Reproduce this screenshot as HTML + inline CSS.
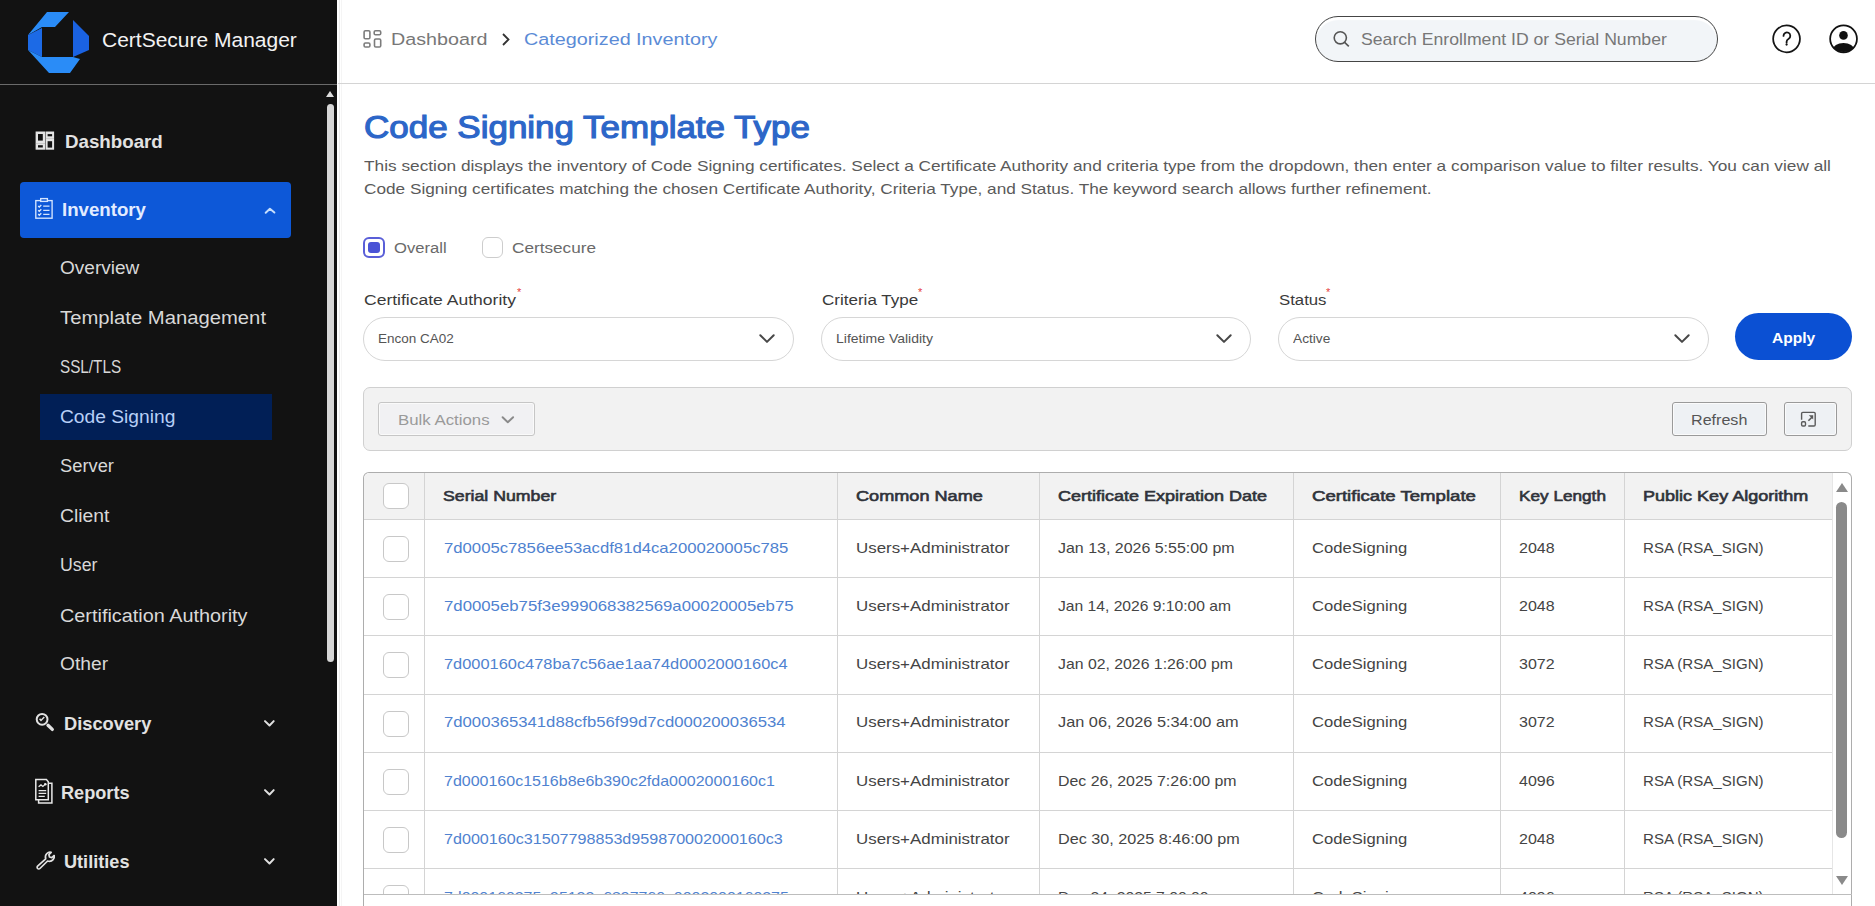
<!DOCTYPE html>
<html><head><meta charset="utf-8">
<style>
*{box-sizing:border-box;margin:0;padding:0}
html,body{width:1875px;height:906px;overflow:hidden;background:#fff;font-family:"Liberation Sans",sans-serif;position:relative}
.abs{position:absolute}
.t{position:absolute;white-space:nowrap;line-height:1;transform-origin:0 0}
.chev{position:absolute;border-right:2px solid #ddd;border-bottom:2px solid #ddd;transform:rotate(45deg)}
.cb{position:absolute;width:26px;height:26px;border:1.5px solid #c8c8c8;border-radius:6px;background:#fff}
.vl{position:absolute;width:1px;background:#d4d4d4}
.hl{position:absolute;height:1px;background:#d4d4d4}
</style></head>
<body>
<div class="abs" style="left:0;top:0;width:337px;height:906px;background:#121212"></div>
<svg class="abs" style="left:0;top:0" width="110" height="84" viewBox="0 0 110 84">
<polygon points="47,12 69,12 55,27 42,27 28,35" fill="#2a8cf7"/>
<polygon points="28,35 42,28 42,57 28,50" fill="#1c6ae6"/>
<polygon points="73,20 89,36 89,50 73,57" fill="#1a62e2"/>
<polygon points="28,50 42,57 73,57 80,59 70,73 49,73" fill="#2a8cf7"/>
</svg>
<div class="t" style="left:102.00px;top:31.16px;font-size:19.3px;font-weight:normal;color:#f2f2f2;transform:scaleX(1.0885);">CertSecure Manager</div>
<div class="abs" style="left:0;top:83.7px;width:337px;height:1.4px;background:#6a6a6a"></div>
<div class="abs" style="left:326.2px;top:91.2px;width:0;height:0;border-left:4.7px solid transparent;border-right:4.7px solid transparent;border-bottom:6.4px solid #ddd"></div>
<div class="abs" style="left:327px;top:104px;width:7px;height:558px;border-radius:4px;background:#d6d6d6"></div>
<div class="abs" style="left:339px;top:0;width:1px;height:906px;background:#ededed"></div><div class="abs" style="left:341px;top:0;width:1px;height:906px;background:#f5f5f5"></div>
<svg class="abs" style="left:30px;top:126px" width="30" height="30" viewBox="30 126 30 30"><g fill="#e4e4e4"><rect x="35.6" y="131.5" width="9.6" height="11.9"/><rect x="35.6" y="143.2" width="9.6" height="6.5"/><rect x="45.6" y="131.5" width="8.5" height="6.9"/><rect x="45.6" y="138.2" width="8.5" height="11.5"/></g><g fill="#121212"><rect x="38" y="134" width="4.8" height="6.6"/><rect x="38" y="145.2" width="4.8" height="2.3"/><rect x="47.6" y="134.1" width="4.5" height="2.2"/><rect x="47.6" y="141.2" width="4.5" height="6.4"/></g></svg>
<div class="t" style="left:64.80px;top:132.82px;font-size:18.4px;font-weight:bold;color:#e2e2e2;transform:scaleX(1.0177);">Dashboard</div>
<div class="abs" style="left:20px;top:182px;width:271px;height:56px;background:#0d58d8;border-radius:4px"></div>
<svg class="abs" style="left:30px;top:194px" width="28" height="28" viewBox="30 194 28 28"><g fill="none" stroke="#d6e6ff" stroke-width="1.35"><rect x="35.8" y="200.6" width="16.3" height="17.6"/><rect x="40.7" y="198.6" width="6.7" height="2.8" fill="#0d58d8"/><path d="M38.2 206l1.1 1.1 2-2M38.2 210.2l1.1 1.1 2-2M38.2 214.1l1.1 1.1 2-2M43.2 206.1h6.3M43.2 210.4h6.3M43.2 214.3h6.3"/></g></svg>
<div class="t" style="left:62.00px;top:200.72px;font-size:18.4px;font-weight:bold;color:#e2ecff;transform:scaleX(1.0143);">Inventory</div>
<svg class="abs" style="left:260px;top:202px" width="20" height="16" viewBox="260 202 20 16"><path d="M265.7 212.7l4.2-3.9 4.5 3.7" fill="none" stroke="#c6defc" stroke-width="2" stroke-linecap="round" stroke-linejoin="round"/></svg>
<div class="abs" style="left:40px;top:394px;width:232px;height:46px;background:#011f56"></div>
<div class="t" style="left:60.30px;top:259.16px;font-size:18px;font-weight:normal;color:#d8d8d8;transform:scaleX(1.0578);">Overview</div>
<div class="t" style="left:60.30px;top:308.66px;font-size:18px;font-weight:normal;color:#d8d8d8;transform:scaleX(1.1251);">Template Management</div>
<div class="t" style="left:60.30px;top:358.16px;font-size:18px;font-weight:normal;color:#d8d8d8;transform:scaleX(0.8482);">SSL/TLS</div>
<div class="t" style="left:60.30px;top:407.56px;font-size:18px;font-weight:normal;color:#b8cff7;transform:scaleX(1.0669);">Code Signing</div>
<div class="t" style="left:60.30px;top:457.16px;font-size:18px;font-weight:normal;color:#d8d8d8;transform:scaleX(1.0168);">Server</div>
<div class="t" style="left:60.30px;top:507.16px;font-size:18px;font-weight:normal;color:#d8d8d8;transform:scaleX(1.0755);">Client</div>
<div class="t" style="left:60.30px;top:556.46px;font-size:18px;font-weight:normal;color:#d8d8d8;transform:scaleX(0.9843);">User</div>
<div class="t" style="left:60.30px;top:606.66px;font-size:18px;font-weight:normal;color:#d8d8d8;transform:scaleX(1.1024);">Certification Authority</div>
<div class="t" style="left:60.30px;top:654.96px;font-size:18px;font-weight:normal;color:#d8d8d8;transform:scaleX(1.0685);">Other</div>
<svg class="abs" style="left:30px;top:708px" width="28" height="28" viewBox="30 708 28 28"><g fill="none" stroke="#e2e2e2"><circle cx="42.1" cy="719.3" r="5.4" stroke-width="2"/><path d="M39.6 718.8l1.4 1.6 3.3-3.4" stroke-width="1.5"/><path d="M48 725.3l4.3 4.1" stroke-width="3.3" stroke-linecap="round"/></g></svg>
<div class="t" style="left:64.00px;top:715.12px;font-size:18.4px;font-weight:bold;color:#e2e2e2;transform:scaleX(0.9935);">Discovery</div>
<svg class="abs" style="left:258px;top:715px" width="22" height="14" viewBox="258 715 22 14"><path d="M265 721.1l4.5 4.4 4.2-4.4" fill="none" stroke="#e0e0e0" stroke-width="2" stroke-linecap="round" stroke-linejoin="round"/></svg>
<svg class="abs" style="left:30px;top:776px" width="28" height="30" viewBox="30 776 28 30"><g fill="none" stroke="#e8e8e8" stroke-width="1.5"><path d="M35.8 779.6h10.6l1.9 2.2v17.9H35.8z"/><path d="M48.3 783.3h3.6v19.8H38.6v-3.4"/><path d="M38.6 786.8l2.4-1.9 1.9 1.5 2.4-2.3" stroke-width="1.3"/><path d="M38.6 790.6h7.6M38.6 793.4h7.6M38.6 796.4h6.2" stroke-width="1.4"/></g><circle cx="45.3" cy="784.2" r="1.3" fill="#eee"/></svg>
<div class="t" style="left:61.40px;top:783.72px;font-size:18.4px;font-weight:bold;color:#e2e2e2;transform:scaleX(0.9868);">Reports</div>
<svg class="abs" style="left:258px;top:784px" width="22" height="14" viewBox="258 784 22 14"><path d="M265 790.1l4.5 4.4 4.2-4.4" fill="none" stroke="#e0e0e0" stroke-width="2" stroke-linecap="round" stroke-linejoin="round"/></svg>
<svg class="abs" style="left:30px;top:846px" width="28" height="28" viewBox="30 846 28 28"><g fill="none" stroke="#e2e2e2" stroke-width="1.7" stroke-linejoin="round"><path d="M37.6 866.2a1.6 1.6 0 0 0 2.3 2.3l7.7-7.5c1.9.6 4.2.1 5.5-1.4 1-1.1 1.4-2.7 1.1-4.1l-2.4 2.1-2.3-.6-.6-2.3 2.3-2.3c-1.5-.4-3.2 0-4.3 1.1-1.4 1.4-1.8 3.5-1.2 5.3z"/></g></svg>
<div class="t" style="left:64.00px;top:852.72px;font-size:18.4px;font-weight:bold;color:#e2e2e2;transform:scaleX(0.9855);">Utilities</div>
<svg class="abs" style="left:258px;top:853px" width="22" height="14" viewBox="258 853 22 14"><path d="M265 859.1l4.5 4.4 4.2-4.4" fill="none" stroke="#e0e0e0" stroke-width="2" stroke-linecap="round" stroke-linejoin="round"/></svg>
<div class="abs" style="left:338px;top:83px;width:1537px;height:1px;background:#d4d4d4"></div>
<svg class="abs" style="left:358px;top:25px" width="30" height="30" viewBox="358 25 30 30"><g fill="none" stroke="#7c7c7c" stroke-width="1.6"><rect x="364.1" y="30.8" width="5.8" height="8" rx="1.3"/><rect x="364.1" y="43" width="5.8" height="4" rx="1.3"/><rect x="374.2" y="30.8" width="6.5" height="4" rx="1.3"/><rect x="374.5" y="39" width="6.2" height="8" rx="1.3"/></g></svg>
<div class="t" style="left:390.50px;top:30.74px;font-size:17.2px;font-weight:normal;color:#777;transform:scaleX(1.1469);">Dashboard</div>
<svg class="abs" style="left:500px;top:32px" width="12" height="15" viewBox="0 0 12 15"><path d="M3 2l5.5 5.5L3 13" fill="none" stroke="#333" stroke-width="1.8"/></svg>
<div class="t" style="left:524.00px;top:30.74px;font-size:17.2px;font-weight:normal;color:#5b8bd6;transform:scaleX(1.1505);">Categorized Inventory</div>
<div class="abs" style="left:1315px;top:16px;width:403px;height:46px;border:1.3px solid #454545;border-radius:23px;background:#f2f5f8;box-shadow:inset 0 3px 1px #fff"></div>
<svg class="abs" style="left:1330px;top:28px" width="24" height="22" viewBox="0 0 24 22"><g fill="none" stroke="#555" stroke-width="1.6"><circle cx="10.3" cy="9.8" r="6.1"/><path d="M14.6 14.3l4.2 4"/></g></svg>
<div class="t" style="left:1360.60px;top:30.88px;font-size:16.2px;font-weight:normal;color:#777;transform:scaleX(1.0897);">Search Enrollment ID or Serial Number</div>
<svg class="abs" style="left:1770px;top:23px" width="32" height="32" viewBox="0 0 32 32"><circle cx="16.55" cy="15.85" r="13.4" fill="none" stroke="#151515" stroke-width="1.75"/><path d="M13.5 12.9a3.4 3.4 0 1 1 5.2 2.8c-1.3.8-2.1 1.5-2.1 3v1.1" fill="none" stroke="#151515" stroke-width="1.8" stroke-linecap="round"/><circle cx="16.6" cy="21.6" r="1.15" fill="#151515"/></svg>
<svg class="abs" style="left:1827px;top:23px" width="32" height="32" viewBox="0 0 32 32"><defs><clipPath id="uc"><circle cx="16.55" cy="15.85" r="13.2"/></clipPath></defs><circle cx="16.55" cy="15.85" r="13.4" fill="none" stroke="#111" stroke-width="1.75"/><circle cx="16.5" cy="12.4" r="4.3" fill="#111"/><g clip-path="url(#uc)"><ellipse cx="16.5" cy="26.8" rx="10.8" ry="6.9" fill="#111"/></g></svg>
<div class="t" style="left:363.80px;top:112.74px;font-size:30.9px;font-weight:normal;color:#2c66c8;transform:scaleX(1.1323);-webkit-text-stroke:1.15px #2c66c8;">Code Signing Template Type</div>
<div class="t" style="left:364.00px;top:158.00px;font-size:15px;font-weight:normal;color:#5a5a5a;transform:scaleX(1.1507);">This section displays the inventory of Code Signing certificates. Select a Certificate Authority and criteria type from the dropdown, then enter a comparison value to filter results. You can view all</div>
<div class="t" style="left:364.00px;top:180.80px;font-size:15px;font-weight:normal;color:#5a5a5a;transform:scaleX(1.1474);">Code Signing certificates matching the chosen Certificate Authority, Criteria Type, and Status. The keyword search allows further refinement.</div>
<div class="abs" style="left:363px;top:237px;width:22px;height:21px;border:2px solid #5a5fd8;border-radius:6px;background:#fff"></div>
<div class="abs" style="left:368px;top:242px;width:12px;height:11px;border-radius:3px;background:#4a53d6"></div>
<div class="t" style="left:393.70px;top:240.46px;font-size:15.4px;font-weight:normal;color:#6a6a6a;transform:scaleX(1.0782);">Overall</div>
<div class="abs" style="left:482px;top:237px;width:21px;height:21px;border:1.5px solid #cdcdcd;border-radius:6px;background:#fff"></div>
<div class="t" style="left:512.30px;top:240.46px;font-size:15.4px;font-weight:normal;color:#6a6a6a;transform:scaleX(1.1152);">Certsecure</div>
<div class="t" style="left:363.80px;top:292.38px;font-size:15.5px;font-weight:normal;color:#3a3a3a;transform:scaleX(1.1303);">Certificate Authority</div>
<div class="t" style="left:517px;top:287px;font-size:11px;color:#e53e3e">*</div>
<div class="t" style="left:821.60px;top:292.38px;font-size:15.5px;font-weight:normal;color:#3a3a3a;transform:scaleX(1.0985);">Criteria Type</div>
<div class="t" style="left:918px;top:287px;font-size:11px;color:#e53e3e">*</div>
<div class="t" style="left:1278.50px;top:292.38px;font-size:15.5px;font-weight:normal;color:#3a3a3a;transform:scaleX(1.0810);">Status</div>
<div class="t" style="left:1326px;top:287px;font-size:11px;color:#e53e3e">*</div>
<div class="abs" style="left:363px;top:317px;width:430.5px;height:44px;border:1px solid #d6d6d6;border-radius:22px;background:#fff"></div>
<div class="t" style="left:378.00px;top:333.16px;font-size:12.8px;font-weight:normal;color:#555;transform:scaleX(1.0547);">Encon CA02</div>
<svg class="abs" style="left:757.5px;top:331px" width="18" height="14" viewBox="0 0 18 14"><path d="M2.3 4.2L9 10.9l6.7-6.7" fill="none" stroke="#474747" stroke-width="2" stroke-linecap="round" stroke-linejoin="round"/></svg>
<div class="abs" style="left:821px;top:317px;width:430.0px;height:44px;border:1px solid #d6d6d6;border-radius:22px;background:#fff"></div>
<div class="t" style="left:836.00px;top:333.16px;font-size:12.8px;font-weight:normal;color:#555;transform:scaleX(1.0937);">Lifetime Validity</div>
<svg class="abs" style="left:1215.0px;top:331px" width="18" height="14" viewBox="0 0 18 14"><path d="M2.3 4.2L9 10.9l6.7-6.7" fill="none" stroke="#474747" stroke-width="2" stroke-linecap="round" stroke-linejoin="round"/></svg>
<div class="abs" style="left:1278px;top:317px;width:430.5px;height:44px;border:1px solid #d6d6d6;border-radius:22px;background:#fff"></div>
<div class="t" style="left:1293.00px;top:333.16px;font-size:12.8px;font-weight:normal;color:#555;transform:scaleX(1.0702);">Active</div>
<svg class="abs" style="left:1672.5px;top:331px" width="18" height="14" viewBox="0 0 18 14"><path d="M2.3 4.2L9 10.9l6.7-6.7" fill="none" stroke="#474747" stroke-width="2" stroke-linecap="round" stroke-linejoin="round"/></svg>
<div class="abs" style="left:1735px;top:313px;width:117px;height:47px;border-radius:24px;background:#0b50d3"></div>
<div class="t" style="left:1772.20px;top:331.15px;font-size:14px;font-weight:bold;color:#fff;transform:scaleX(1.1108);">Apply</div>
<div class="abs" style="left:363px;top:387px;width:1489px;height:64px;border:1px solid #d0d0d0;border-radius:7px;background:#f2f2f2"></div>
<div class="abs" style="left:378px;top:402px;width:157px;height:34px;border:1px solid #c6c6c6;border-radius:3px;background:#f1f1f3;box-shadow:inset 0 0 0 1px #fafafa"></div>
<div class="t" style="left:397.60px;top:412.81px;font-size:14.4px;font-weight:normal;color:#9a9a9a;transform:scaleX(1.1678);">Bulk Actions</div>
<svg class="abs" style="left:500px;top:413px" width="16" height="12" viewBox="0 0 16 12"><path d="M2.6 4.2l5.2 5 5.3-5" fill="none" stroke="#8a8a8a" stroke-width="1.9" stroke-linecap="round" stroke-linejoin="round"/></svg>
<div class="abs" style="left:1672px;top:402px;width:95px;height:34px;border:1px solid #9a9a9a;border-radius:3px;background:#eef1f4;box-shadow:inset 0 0 0 1px #fbfbfb"></div>
<div class="t" style="left:1691.00px;top:412.81px;font-size:14.4px;font-weight:normal;color:#555;transform:scaleX(1.1187);">Refresh</div>
<div class="abs" style="left:1784px;top:402px;width:53px;height:34px;border:1px solid #9a9a9a;border-radius:3px;background:#eef1f4;box-shadow:inset 0 0 0 1px #fbfbfb"></div>
<svg class="abs" style="left:1799px;top:410px" width="20" height="19" viewBox="0 0 20 19"><g fill="none" stroke="#5a5a5a" stroke-width="1.4"><path d="M2.6 9.8V3.6a1.2 1.2 0 0 1 1.2-1.2h11.2a1.2 1.2 0 0 1 1.2 1.2v11.2a1.2 1.2 0 0 1-1.2 1.2H9.3"/><rect x="2.6" y="11.8" width="3.9" height="4.2" rx="1.2"/><path d="M9.4 10.8l3.8-3.8" stroke-width="1.6"/></g><path d="M9.8 5.2h4.4v4.4z" fill="#5a5a5a"/></svg>
<div class="abs" style="left:363px;top:472px;width:1489px;height:434px;border:1px solid #adadad;border-bottom:none;border-radius:6px 6px 0 0;background:#fff"></div>
<div class="abs" style="left:364px;top:473px;width:1468px;height:46px;background:#f2f2f2;border-radius:6px 0 0 0"></div>
<div class="vl" style="left:424.0px;top:473px;height:421px"></div>
<div class="vl" style="left:837.0px;top:473px;height:421px"></div>
<div class="vl" style="left:1039.0px;top:473px;height:421px"></div>
<div class="vl" style="left:1293.0px;top:473px;height:421px"></div>
<div class="vl" style="left:1500.0px;top:473px;height:421px"></div>
<div class="vl" style="left:1624.0px;top:473px;height:421px"></div>
<div class="hl" style="left:364px;top:518.9px;width:1468px"></div>
<div class="hl" style="left:364px;top:577.1px;width:1468px"></div>
<div class="hl" style="left:364px;top:635.3px;width:1468px"></div>
<div class="hl" style="left:364px;top:693.5px;width:1468px"></div>
<div class="hl" style="left:364px;top:751.7px;width:1468px"></div>
<div class="hl" style="left:364px;top:809.9px;width:1468px"></div>
<div class="hl" style="left:364px;top:868.1px;width:1468px"></div>
<div class="hl" style="left:364px;top:894px;width:1488px;background:#bdbdbd"></div>
<div class="abs" style="left:1831.5px;top:473px;width:1px;height:421px;background:#e6e6e6"></div>
<div class="abs" style="left:1835.5px;top:483px;width:0;height:0;border-left:6px solid transparent;border-right:6px solid transparent;border-bottom:9px solid #8a8a8a"></div>
<div class="abs" style="left:1836px;top:502px;width:11px;height:336px;border-radius:6px;background:#8a8a8a"></div>
<div class="abs" style="left:1835.5px;top:875.5px;width:0;height:0;border-left:6px solid transparent;border-right:6px solid transparent;border-top:9px solid #8a8a8a"></div>
<div class="cb" style="left:383px;top:483px"></div>
<div class="t" style="left:443.00px;top:488.58px;font-size:14.9px;font-weight:normal;color:#30333a;transform:scaleX(1.1898);-webkit-text-stroke:0.6px #30333a;">Serial Number</div>
<div class="t" style="left:856.00px;top:488.58px;font-size:14.9px;font-weight:normal;color:#30333a;transform:scaleX(1.2163);-webkit-text-stroke:0.6px #30333a;">Common Name</div>
<div class="t" style="left:1057.60px;top:488.58px;font-size:14.9px;font-weight:normal;color:#30333a;transform:scaleX(1.2087);-webkit-text-stroke:0.6px #30333a;">Certificate Expiration Date</div>
<div class="t" style="left:1312.40px;top:488.58px;font-size:14.9px;font-weight:normal;color:#30333a;transform:scaleX(1.2481);-webkit-text-stroke:0.6px #30333a;">Certificate Template</div>
<div class="t" style="left:1519.00px;top:488.58px;font-size:14.9px;font-weight:normal;color:#30333a;transform:scaleX(1.1539);-webkit-text-stroke:0.6px #30333a;">Key Length</div>
<div class="t" style="left:1642.80px;top:488.58px;font-size:14.9px;font-weight:normal;color:#30333a;transform:scaleX(1.2104);-webkit-text-stroke:0.6px #30333a;">Public Key Algorithm</div>
<div class="abs" style="left:364px;top:519px;width:1468px;height:375px;overflow:hidden">
<div class="cb" style="left:19px;top:16.9px"></div>
<div class="t" style="left:79.70px;top:21.81px;font-size:14.4px;font-weight:normal;color:#4f82d0;transform:scaleX(1.1599);">7d0005c7856ee53acdf81d4ca200020005c785</div>
<div class="t" style="left:492.00px;top:21.81px;font-size:14.4px;font-weight:normal;color:#444;transform:scaleX(1.1740);">Users+Administrator</div>
<div class="t" style="left:693.60px;top:21.81px;font-size:14.4px;font-weight:normal;color:#444;transform:scaleX(1.1091);">Jan 13, 2026 5:55:00 pm</div>
<div class="t" style="left:948.40px;top:21.81px;font-size:14.4px;font-weight:normal;color:#444;transform:scaleX(1.1544);">CodeSigning</div>
<div class="t" style="left:1155.00px;top:21.81px;font-size:14.4px;font-weight:normal;color:#444;transform:scaleX(1.1111);">2048</div>
<div class="t" style="left:1278.80px;top:21.81px;font-size:14.4px;font-weight:normal;color:#444;transform:scaleX(1.0475);">RSA (RSA_SIGN)</div>
<div class="cb" style="left:19px;top:75.1px"></div>
<div class="t" style="left:79.70px;top:80.01px;font-size:14.4px;font-weight:normal;color:#4f82d0;transform:scaleX(1.1647);">7d0005eb75f3e999068382569a00020005eb75</div>
<div class="t" style="left:492.00px;top:80.01px;font-size:14.4px;font-weight:normal;color:#444;transform:scaleX(1.1740);">Users+Administrator</div>
<div class="t" style="left:693.60px;top:80.01px;font-size:14.4px;font-weight:normal;color:#444;transform:scaleX(1.0865);">Jan 14, 2026 9:10:00 am</div>
<div class="t" style="left:948.40px;top:80.01px;font-size:14.4px;font-weight:normal;color:#444;transform:scaleX(1.1544);">CodeSigning</div>
<div class="t" style="left:1155.00px;top:80.01px;font-size:14.4px;font-weight:normal;color:#444;transform:scaleX(1.1111);">2048</div>
<div class="t" style="left:1278.80px;top:80.01px;font-size:14.4px;font-weight:normal;color:#444;transform:scaleX(1.0475);">RSA (RSA_SIGN)</div>
<div class="cb" style="left:19px;top:133.3px"></div>
<div class="t" style="left:79.70px;top:138.21px;font-size:14.4px;font-weight:normal;color:#4f82d0;transform:scaleX(1.1388);">7d000160c478ba7c56ae1aa74d0002000160c4</div>
<div class="t" style="left:492.00px;top:138.21px;font-size:14.4px;font-weight:normal;color:#444;transform:scaleX(1.1740);">Users+Administrator</div>
<div class="t" style="left:693.60px;top:138.21px;font-size:14.4px;font-weight:normal;color:#444;transform:scaleX(1.0990);">Jan 02, 2026 1:26:00 pm</div>
<div class="t" style="left:948.40px;top:138.21px;font-size:14.4px;font-weight:normal;color:#444;transform:scaleX(1.1544);">CodeSigning</div>
<div class="t" style="left:1155.00px;top:138.21px;font-size:14.4px;font-weight:normal;color:#444;transform:scaleX(1.1111);">3072</div>
<div class="t" style="left:1278.80px;top:138.21px;font-size:14.4px;font-weight:normal;color:#444;transform:scaleX(1.0475);">RSA (RSA_SIGN)</div>
<div class="cb" style="left:19px;top:191.5px"></div>
<div class="t" style="left:79.70px;top:196.41px;font-size:14.4px;font-weight:normal;color:#4f82d0;transform:scaleX(1.1598);">7d000365341d88cfb56f99d7cd000200036534</div>
<div class="t" style="left:492.00px;top:196.41px;font-size:14.4px;font-weight:normal;color:#444;transform:scaleX(1.1740);">Users+Administrator</div>
<div class="t" style="left:693.60px;top:196.41px;font-size:14.4px;font-weight:normal;color:#444;transform:scaleX(1.1342);">Jan 06, 2026 5:34:00 am</div>
<div class="t" style="left:948.40px;top:196.41px;font-size:14.4px;font-weight:normal;color:#444;transform:scaleX(1.1544);">CodeSigning</div>
<div class="t" style="left:1155.00px;top:196.41px;font-size:14.4px;font-weight:normal;color:#444;transform:scaleX(1.1111);">3072</div>
<div class="t" style="left:1278.80px;top:196.41px;font-size:14.4px;font-weight:normal;color:#444;transform:scaleX(1.0475);">RSA (RSA_SIGN)</div>
<div class="cb" style="left:19px;top:249.7px"></div>
<div class="t" style="left:79.70px;top:254.61px;font-size:14.4px;font-weight:normal;color:#4f82d0;transform:scaleX(1.1115);">7d000160c1516b8e6b390c2fda0002000160c1</div>
<div class="t" style="left:492.00px;top:254.61px;font-size:14.4px;font-weight:normal;color:#444;transform:scaleX(1.1740);">Users+Administrator</div>
<div class="t" style="left:693.60px;top:254.61px;font-size:14.4px;font-weight:normal;color:#444;transform:scaleX(1.1051);">Dec 26, 2025 7:26:00 pm</div>
<div class="t" style="left:948.40px;top:254.61px;font-size:14.4px;font-weight:normal;color:#444;transform:scaleX(1.1544);">CodeSigning</div>
<div class="t" style="left:1155.00px;top:254.61px;font-size:14.4px;font-weight:normal;color:#444;transform:scaleX(1.1111);">4096</div>
<div class="t" style="left:1278.80px;top:254.61px;font-size:14.4px;font-weight:normal;color:#444;transform:scaleX(1.0475);">RSA (RSA_SIGN)</div>
<div class="cb" style="left:19px;top:307.9px"></div>
<div class="t" style="left:79.70px;top:312.81px;font-size:14.4px;font-weight:normal;color:#4f82d0;transform:scaleX(1.1199);">7d000160c31507798853d959870002000160c3</div>
<div class="t" style="left:492.00px;top:312.81px;font-size:14.4px;font-weight:normal;color:#444;transform:scaleX(1.1740);">Users+Administrator</div>
<div class="t" style="left:693.60px;top:312.81px;font-size:14.4px;font-weight:normal;color:#444;transform:scaleX(1.1248);">Dec 30, 2025 8:46:00 pm</div>
<div class="t" style="left:948.40px;top:312.81px;font-size:14.4px;font-weight:normal;color:#444;transform:scaleX(1.1544);">CodeSigning</div>
<div class="t" style="left:1155.00px;top:312.81px;font-size:14.4px;font-weight:normal;color:#444;transform:scaleX(1.1111);">2048</div>
<div class="t" style="left:1278.80px;top:312.81px;font-size:14.4px;font-weight:normal;color:#444;transform:scaleX(1.0475);">RSA (RSA_SIGN)</div>
<div class="cb" style="left:19px;top:366.1px"></div>
<div class="t" style="left:79.70px;top:371.01px;font-size:14.4px;font-weight:normal;color:#4f82d0;transform:scaleX(1.1046);">7d000160275a95122a6897760a0002000160275</div>
<div class="t" style="left:492.00px;top:371.01px;font-size:14.4px;font-weight:normal;color:#444;transform:scaleX(1.1740);">Users+Administrator</div>
<div class="t" style="left:693.60px;top:371.01px;font-size:14.4px;font-weight:normal;color:#444;transform:scaleX(1.0945);">Dec 24, 2025 7:00:00 pm</div>
<div class="t" style="left:948.40px;top:371.01px;font-size:14.4px;font-weight:normal;color:#444;transform:scaleX(1.1544);">CodeSigning</div>
<div class="t" style="left:1155.00px;top:371.01px;font-size:14.4px;font-weight:normal;color:#444;transform:scaleX(1.1111);">4096</div>
<div class="t" style="left:1278.80px;top:371.01px;font-size:14.4px;font-weight:normal;color:#444;transform:scaleX(1.0475);">RSA (RSA_SIGN)</div>
</div>
</body></html>
